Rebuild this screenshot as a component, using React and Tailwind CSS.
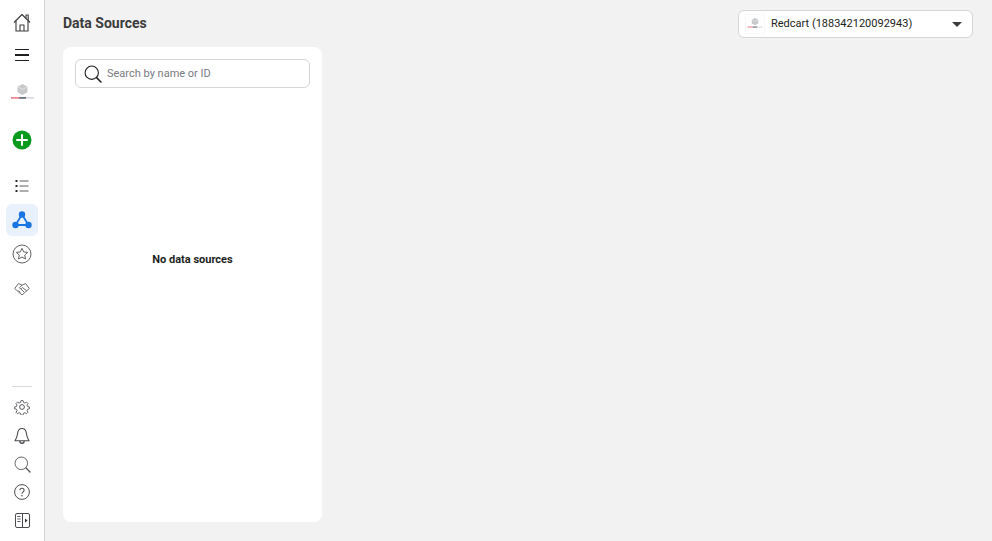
const ink = "#3a3b3c";

function Logo({ small }) {
  return (
    <svg width={small ? 16 : 23} height={small ? 13 : 20} viewBox="0 0 23 20">
      <path d="M11.5 0 L16.5 2.7 V8.3 L11.5 11 L6.5 8.3 V2.7 Z" fill="#c6c8ca" />
      <path d="M6.5 2.7 L11.5 5.4 L16.5 2.7" fill="none" stroke="#ececec" strokeWidth="0.8" />
      <rect x="0" y="13" width="8" height="1.8" fill="#e98a97" />
      <rect x="8" y="13" width="7" height="1.8" fill="#6e7080" />
      <rect x="15" y="13" width="8" height="1.8" fill="#dcdce0" />
    </svg>
  );
}

function SearchIcon({ size = 20, color = "#1c1e21", w = 1.2 }) {
  return (
    <svg width={size} height={size} viewBox="0 0 20 20" fill="none" stroke={color} strokeWidth={w}>
      <circle cx="8.6" cy="8.6" r="7.4" />
      <path d="M14 14 L18.8 18.8" strokeWidth={w + 0.5} strokeLinecap="round" />
    </svg>
  );
}

function Slot({ children, active }) {
  return (
    <div className={`flex w-[32px] items-center justify-center rounded-md ${active ? "my-[1px] h-[32px] bg-[#e9f1fc]" : "h-[34px]"}`}>
      {children}
    </div>
  );
}

export default function App() {
  return (
    <div className="flex h-[541px] w-[992px] overflow-hidden bg-[#f2f2f2] font-['Roboto','Liberation_Sans',sans-serif]">
      <aside className="flex h-full w-[45px] shrink-0 flex-col items-center justify-between border-r border-[#d0d2d5] bg-white pt-[5px] pb-[7px]">
        <div className="flex flex-col items-center">
          <Slot>
            <svg width="18" height="19" viewBox="0 0 18 19" fill="none" stroke={ink} strokeWidth="1.1" strokeLinejoin="round">
              <path d="M1 9.5 L9 1.5 L17 9.5" />
              <path d="M3 8 V18 H15 V8" />
              <path d="M7 18 V12 H11 V18" />
              <path d="M13 5.5 V2 H15.2 V7.5" />
            </svg>
          </Slot>
          <div className="flex h-[32px] w-[32px] items-center justify-center">
            <div className="flex w-[14px] flex-col gap-[4px]">
              <div className="h-[1.5px] bg-[#1c1e21]" />
              <div className="h-[1.5px] bg-[#1c1e21]" />
              <div className="h-[1.5px] bg-[#1c1e21]" />
            </div>
          </div>
          <div className="mt-[6px] flex h-[34px] w-[32px] items-center justify-center">
            <Logo />
          </div>
          <div className="mt-[12px] flex h-[34px] w-[32px] items-center justify-center">
            <svg width="20" height="20" viewBox="0 0 20 20">
              <circle cx="10" cy="10" r="9.5" fill="#0a9a1e" />
              <path d="M10 5 V15 M5 10 H15" stroke="#fff" strokeWidth="2" strokeLinecap="round" />
            </svg>
          </div>
          <div className="mt-[12px]">
            <Slot>
              <svg width="14" height="13" viewBox="0 0 14 13" fill="none" stroke="#5a5c5f" strokeWidth="1">
                <path d="M4.5 1 H13.5 M4.5 6 H13.5 M4.5 11 H13.5" />
                <rect x="0.5" y="0" width="2" height="2" fill="#2a2b2c" stroke="none" />
                <rect x="0.5" y="5" width="2" height="2" fill="#2a2b2c" stroke="none" />
                <rect x="0.5" y="10" width="2" height="2" fill="#2a2b2c" stroke="none" />
              </svg>
            </Slot>
          </div>
          <Slot active>
            <svg width="20" height="18" viewBox="0 0 20 18">
              <path d="M10 3.5 L3.5 14 H16.5 Z" fill="none" stroke="#1b74e4" strokeWidth="1.8" />
              <circle cx="10" cy="3.5" r="3.2" fill="#1b74e4" />
              <circle cx="3.5" cy="14" r="3.2" fill="#1b74e4" />
              <circle cx="16.5" cy="14" r="3.2" fill="#1b74e4" />
            </svg>
          </Slot>
          <Slot>
            <svg width="20" height="20" viewBox="0 0 20 20" fill="none" stroke="#5f6164" strokeWidth="1">
              <circle cx="10" cy="10" r="9" />
              <path d="M10 4.3 L11.7 7.9 L15.7 8.4 L12.7 11.1 L13.5 15 L10 13 L6.5 15 L7.3 11.1 L4.3 8.4 L8.3 7.9 Z" strokeLinejoin="round" />
            </svg>
          </Slot>
          <div className="mt-[1px]">
            <Slot>
              <svg width="16" height="14" viewBox="0 0 16 14" fill="none" stroke="#5a5c5f" strokeWidth="0.9" strokeLinejoin="round">
                <path d="M0.7 6.5 L4.5 1.5 L8 3.2 L11.5 1.5 L15.3 6.5 L8 13 Z" />
                <path d="M8 3.2 L5.3 5.8 C6 7 7.5 7 8.5 5.6 L12.8 9" />
                <path d="M4.5 8.6 L6.5 10.6 M7 7 L10 10" />
              </svg>
            </Slot>
          </div>
        </div>

        <div className="flex flex-col items-center">
          <div className="mb-[6px] h-px w-[20px] bg-[#d8dadd]" />
          <div className="flex h-[28px] w-[32px] items-center justify-center">
            <svg width="16" height="16" viewBox="0 0 24 24" fill="none" stroke="#4a4c4f" strokeWidth="1.4" strokeLinejoin="round">
              <circle cx="12" cy="12" r="3.6" />
              <path d="M10.2 1.5 h3.6 l.6 3 2.4 1 2.6-1.7 2.5 2.5-1.7 2.6 1 2.4 3 .6 v3.1 l-3 .6-1 2.4 1.7 2.6-2.5 2.5-2.6-1.7-2.4 1-.6 3 h-3.6 l-.6-3-2.4-1-2.6 1.7-2.5-2.5 1.7-2.6-1-2.4-3-.6 v-3.1 l3-.6 1-2.4-1.7-2.6 2.5-2.5 2.6 1.7 2.4-1 Z" transform="translate(1.1 1.1) scale(.91)" />
            </svg>
          </div>
          <div className="flex h-[29px] w-[32px] items-center justify-center">
            <svg width="16" height="18" viewBox="0 0 16 18" fill="none" stroke="#4a4c4f" strokeWidth="1.1" strokeLinejoin="round">
              <path d="M8 1.5 C4.8 1.5 3.8 4 3.5 7 C3.2 10 2 12 1 13.8 H15 C14 12 12.8 10 12.5 7 C12.2 4 11.2 1.5 8 1.5 Z" />
              <path d="M5.8 14 C6 17 10 17 10.2 14" strokeWidth="1.4" />
            </svg>
          </div>
          <div className="flex h-[28px] w-[32px] items-center justify-center">
            <SearchIcon size={17} color="#4a4c4f" w={1} />
          </div>
          <div className="flex h-[28px] w-[32px] items-center justify-center">
            <svg width="16" height="16" viewBox="0 0 16 16" fill="none" stroke="#4a4c4f" strokeWidth="1">
              <circle cx="8" cy="8" r="7.4" />
              <path d="M5.9 6.2 C5.9 3.6 10.1 3.6 10.1 6.2 C10.1 7.9 8 7.8 8 9.8" strokeWidth="1.1" />
              <circle cx="8" cy="11.8" r="0.8" fill="#4a4c4f" stroke="none" />
            </svg>
          </div>
          <div className="flex h-[28px] w-[32px] items-center justify-center">
            <svg width="15" height="15" viewBox="0 0 15 15" fill="none" stroke="#4a4c4f" strokeWidth="1">
              <rect x="0.5" y="0.5" width="14" height="14" rx="1.5" />
              <path d="M7.5 0.5 V14.5" />
              <path d="M2.3 3.5 H5.5 M2.3 6 H5.5 M2.3 8.5 H5.5" strokeWidth="0.9" />
              <path d="M10 5.5 L12.5 7.5 L10 9.5 Z" fill="#2a2b2c" stroke="none" />
            </svg>
          </div>
        </div>
      </aside>

      <main className="flex min-w-0 flex-1 flex-col pl-[18px] pr-[19px] pt-[10px] pb-[19px]">
        <header className="flex h-[28px] shrink-0 items-center justify-between">
          <h1 className="-mt-[3px] text-[14px] font-bold leading-none text-[#3a3b3c]">Data Sources</h1>
          <div className="flex h-[28px] w-[235px] items-center rounded-md border border-[#d5d6d8] bg-white pl-[6px] pr-[10px]">
            <div className="flex h-[20px] w-[20px] items-center justify-center border border-[#f8f8f8]"><Logo small /></div>
            <span className="ml-[6px] flex-1 text-[11px] text-[#1c1e21]">Redcart (188342120092943)</span>
            <div className="h-0 w-0 border-x-[5px] border-t-[5px] border-x-transparent border-t-[#3a3b3c]" />
          </div>
        </header>

        <section className="mt-[9px] flex min-h-0 w-[259px] flex-1 flex-col rounded-lg bg-white px-[12px] pt-[12px] pb-[12px]">
          <div className="flex h-[29px] shrink-0 items-center gap-[5px] rounded-md border border-[#d5d6d8] bg-white pl-[8px]">
            <SearchIcon size={18} />
            <span className="pt-[2px] text-[11px] text-[#777a7e]">Search by name or ID</span>
          </div>
          <div className="flex flex-1 items-center justify-center pb-[77px]">
            <span className="text-[11px] font-bold text-[#1c1e21]">No data sources</span>
          </div>
        </section>
      </main>
    </div>
  );
}
